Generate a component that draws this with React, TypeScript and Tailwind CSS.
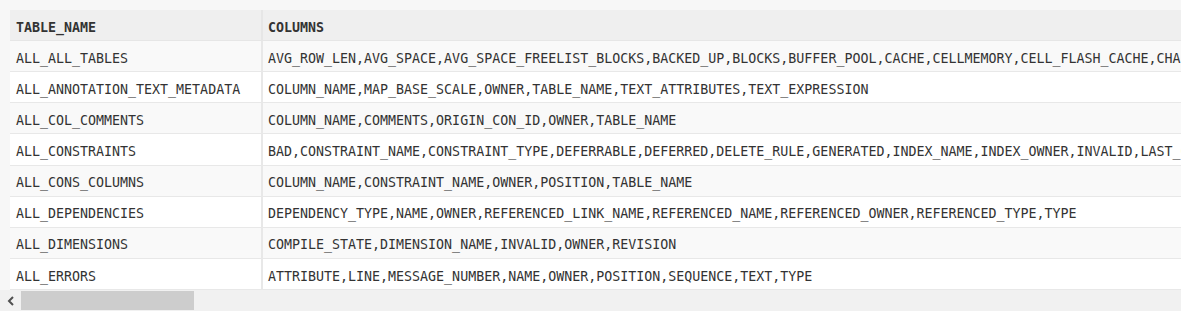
import React from "react";

const rows: [string, string][] = [
  ["ALL_ALL_TABLES", "AVG_ROW_LEN,AVG_SPACE,AVG_SPACE_FREELIST_BLOCKS,BACKED_UP,BLOCKS,BUFFER_POOL,CACHE,CELLMEMORY,CELL_FLASH_CACHE,CHAIN_CNT,CLUSTER_NAME,CLUSTERING"],
  ["ALL_ANNOTATION_TEXT_METADATA", "COLUMN_NAME,MAP_BASE_SCALE,OWNER,TABLE_NAME,TEXT_ATTRIBUTES,TEXT_EXPRESSION"],
  ["ALL_COL_COMMENTS", "COLUMN_NAME,COMMENTS,ORIGIN_CON_ID,OWNER,TABLE_NAME"],
  ["ALL_CONSTRAINTS", "BAD,CONSTRAINT_NAME,CONSTRAINT_TYPE,DEFERRABLE,DEFERRED,DELETE_RULE,GENERATED,INDEX_NAME,INDEX_OWNER,INVALID,LAST_CHANGE,OWNER"],
  ["ALL_CONS_COLUMNS", "COLUMN_NAME,CONSTRAINT_NAME,OWNER,POSITION,TABLE_NAME"],
  ["ALL_DEPENDENCIES", "DEPENDENCY_TYPE,NAME,OWNER,REFERENCED_LINK_NAME,REFERENCED_NAME,REFERENCED_OWNER,REFERENCED_TYPE,TYPE"],
  ["ALL_DIMENSIONS", "COMPILE_STATE,DIMENSION_NAME,INVALID,OWNER,REVISION"],
  ["ALL_ERRORS", "ATTRIBUTE,LINE,MESSAGE_NUMBER,NAME,OWNER,POSITION,SEQUENCE,TEXT,TYPE"],
];

export default function App() {
  return (
    <div
      className="w-[1181px] h-[324px] bg-white overflow-hidden text-[#333] text-[13.3px]"
      style={{ fontFamily: '"DejaVu Sans Mono", "Liberation Mono", monospace' }}
    >
      <div className="h-[290px] bg-[#f7f7f7] pl-[10px] pt-[10px] overflow-hidden">
        <div className="w-max bg-white">
          <div className="flex h-[31px] bg-[#efefef] border-b border-[#e6e6e6] font-bold">
            <div className="w-[253px] shrink-0 px-[6px] pt-[5px] flex items-center border-r-2 border-[#e6e6e6]">TABLE_NAME</div>
            <div className="w-[1400px] px-[5px] pt-[5px] flex items-center">COLUMNS</div>
          </div>
          {rows.map(([name, cols], i) => (
            <div
              key={name}
              className={`flex h-[31.15px] border-b border-[#e8e8e8] ${i % 2 === 0 ? "bg-[#f9f9f9]" : "bg-white"}`}
            >
              <div className="w-[253px] shrink-0 px-[6px] pt-[5px] flex items-center border-r-2 border-[#e8e8e8] whitespace-nowrap">{name}</div>
              <div className="w-[1400px] px-[5px] pt-[5px] flex items-center whitespace-nowrap">{cols}</div>
            </div>
          ))}
        </div>
      </div>
      <div className="h-[21px] bg-[#f1f1f1] flex items-center">
        <div className="w-[21px] h-full flex items-center justify-center">
          <svg width="10" height="10" viewBox="0 0 10 10">
            <path d="M7 1 L3 5 L7 9" fill="none" stroke="#505050" strokeWidth="2" />
          </svg>
        </div>
        <div className="w-[173px] h-[19px] bg-[#cdcdcd]" />
      </div>
    </div>
  );
}
